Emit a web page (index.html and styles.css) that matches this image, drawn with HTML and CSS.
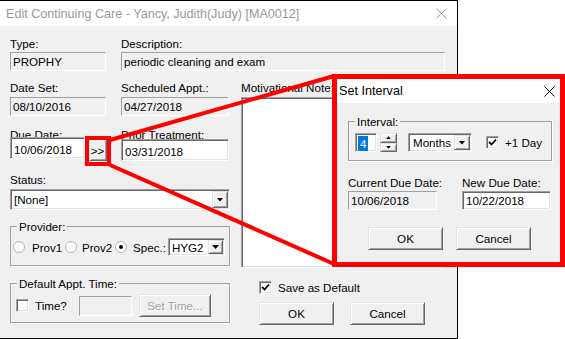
FILE: index.html
```html
<!DOCTYPE html>
<html lang="en">
<head>
    <meta charset="UTF-8">
    <meta name="viewport" content="width=device-width, initial-scale=1.0">
    <title>Edit Continuing Care</title>
    <link rel="stylesheet" href="styles.css">
</head>
<body>
<div class="screen">
    <div class="win">
        <div class="titlebar">
            <span class="title">Edit Continuing Care - Yancy, Judith(Judy) [MA0012]</span>
            <svg class="x" width="11" height="11" viewBox="0 0 11 11"><path d="M0.5 0.5L10.5 10.5M10.5 0.5L0.5 10.5" stroke="#999" stroke-width="1"/></svg>
        </div>
        <div class="body">
            <div class="row1">
                <div class="blk w-type">
                    <div class="lbl">Type:</div>
                    <div class="fld ro">PROPHY</div>
                </div>
                <div class="blk w-desc">
                    <div class="lbl">Description:</div>
                    <div class="fld ro">periodic cleaning and exam</div>
                </div>
            </div>
            <div class="main">
                <div class="left">
                    <div class="row2">
                        <div class="blk w-type">
                            <div class="lbl">Date Set:</div>
                            <div class="fld ro">08/10/2016</div>
                        </div>
                        <div class="blk w-sched">
                            <div class="lbl">Scheduled Appt.:</div>
                            <div class="fld ro">04/27/2018</div>
                        </div>
                    </div>
                    <div class="row3">
                        <div class="blk w-due">
                            <div class="lbl">Due Date:</div>
                            <div class="duebox">
                                <div class="fld ed tall w-duef">10/06/2018</div>
                                <div class="btn more">&gt;&gt;</div>
                            </div>
                        </div>
                        <div class="blk w-prior">
                            <div class="lbl">Prior Treatment:</div>
                            <div class="fld ed tall">03/31/2018</div>
                        </div>
                    </div>
                    <div class="lbl status-lbl">Status:</div>
                    <div class="combo ed status"><span>[None]</span><span class="drop"></span></div>
                    <fieldset class="grp provider">
                        <legend>Provider:</legend>
                        <div class="radios">
                            <div class="opt o1"><span class="radio"></span>Prov1</div>
                            <div class="opt o2"><span class="radio"></span>Prov2</div>
                            <div class="opt o3"><span class="radio on"></span>Spec.:</div>
                            <div class="combo ed hyg"><span>HYG2</span><span class="drop"></span></div>
                        </div>
                    </fieldset>
                    <fieldset class="grp deftime">
                        <legend>Default Appt. Time:</legend>
                        <div class="timerow">
                            <div class="opt tcheck"><span class="check"></span>Time?</div>
                            <div class="fld ro timefld"></div>
                            <div class="btn settime">Set Time...</div>
                        </div>
                    </fieldset>
                </div>
                <div class="right">
                    <div class="lbl">Motivational Note:</div>
                    <div class="memo ed"></div>
                    <div class="opt savedef">
                        <span class="check on"><svg width="9" height="9" viewBox="0 0 9 9"><path d="M1 4L3.5 6.5L8 1.5" fill="none" stroke="#000" stroke-width="1.8"/></svg></span>Save as Default
                    </div>
                    <div class="btnrow">
                        <div class="btn big">OK</div>
                        <div class="btn big">Cancel</div>
                    </div>
                </div>
            </div>
        </div>
    </div>

    <div class="dlg">
        <div class="dlg-title">
            <span class="dlg-name">Set Interval</span>
            <svg class="x" width="11" height="11" viewBox="0 0 11 11"><path d="M0.5 0.5L10.5 10.5M10.5 0.5L0.5 10.5" stroke="#000" stroke-width="1"/></svg>
        </div>
        <div class="dlg-body">
            <fieldset class="grp interval">
                <legend>Interval:</legend>
                <div class="introw">
                    <div class="fld ed spin"><span class="sel">4</span></div>
                    <div class="spinbtns">
                        <span class="btn sb"><span class="up"></span></span>
                        <span class="btn sb"><span class="dn"></span></span>
                    </div>
                    <div class="combo ed months"><span>Months</span><span class="drop"></span></div>
                    <div class="opt plusday">
                        <span class="check on"><svg width="9" height="9" viewBox="0 0 9 9"><path d="M1 4L3.5 6.5L8 1.5" fill="none" stroke="#000" stroke-width="1.8"/></svg></span>+1 Day
                    </div>
                </div>
            </fieldset>
            <div class="dates">
                <div class="blk w-date">
                    <div class="lbl">Current Due Date:</div>
                    <div class="fld ro">10/06/2018</div>
                </div>
                <div class="blk w-date">
                    <div class="lbl">New Due Date:</div>
                    <div class="fld ed">10/22/2018</div>
                </div>
            </div>
            <div class="dlg-btns">
                <div class="btn big">OK</div>
                <div class="btn big">Cancel</div>
            </div>
        </div>
    </div>

    <svg class="callout" width="565" height="339" viewBox="0 0 565 339">
        <rect x="87" y="138" width="22" height="26" fill="none" stroke="#f00" stroke-width="4"/>
        <line x1="110" y1="140" x2="334" y2="76" stroke="#f00" stroke-width="4"/>
        <line x1="110" y1="165" x2="334" y2="264" stroke="#f00" stroke-width="4"/>
    </svg>
</div>
</body>
</html>
```

FILE: styles.css
```css
*{
    margin: 0;
    padding: 0;
    box-sizing: border-box;
}
body{
    background: #fff;
    font-family: "Liberation Sans", Arial, sans-serif;
    font-size: 11.6px;
    color: #000;
}
.screen{
    position: relative;
    width: 565px;
    height: 339px;
    overflow: hidden;
}

/* main window */
.win{
    width: 458px;
    height: 339px;
    background: #f0f0f0;
    border: 1px solid #000;
    border-left: none;
}
.titlebar{
    height: 25px;
    background: #fff;
    display: flex;
    align-items: center;
    padding-left: 6px;
}
.title{
    flex: 1;
    font-size: 12.6px;
    color: #999;
}
.titlebar .x{
    margin-right: 10px;
}
.body{
    padding: 11px 0 0 10px;
}
.lbl{
    height: 13px;
    line-height: 13px;
    white-space: nowrap;
}
.blk .fld{
    margin-top: 2px;
}
.fld{
    height: 19px;
    line-height: 17px;
    padding-left: 2px;
    white-space: nowrap;
    overflow: hidden;
}
.ro{
    border: 1px solid;
    border-color: #a0a0a0 #fff #fff #a0a0a0;
}
.ed{
    background: #fff;
    border: 1px solid;
    border-color: #a0a0a0 #fff #fff #a0a0a0;
    box-shadow: inset 1px 1px #696969, inset -1px -1px #e3e3e3;
}
.btn{
    background: #f0f0f0;
    border: 1px solid;
    border-color: #e3e3e3 #696969 #696969 #e3e3e3;
    box-shadow: inset 1px 1px #fff, inset -1px -1px #a0a0a0;
    display: flex;
    align-items: center;
    justify-content: center;
}
.row1{
    display: flex;
    gap: 15px;
}
.w-type{ width: 96px; }
.w-desc{ width: 324px; }
.w-sched{ width: 108px; }
.w-due{ width: 97px; }
.w-prior{ width: 108px; }
.w-duef{ width: 75px; }

.main{
    display: flex;
    gap: 10px;
    margin-top: 10px;
}
.left{
    width: 221px;
}
.row2{
    display: flex;
    gap: 15px;
}
.row2 .fld{
    margin-top: 3px;
}
.row3{
    display: flex;
    gap: 14px;
    margin-top: 12px;
}
.row3 .blk .fld, .duebox{
    margin-top: -2px;
}
.duebox{
    display: flex;
    gap: 4px;
}
.duebox .fld{
    margin-top: 0;
}
.tall{
    height: 22px;
    line-height: 19px;
    padding-top: 2px;
    padding-left: 3px;
}
.more{
    width: 18px;
    height: 22px;
    padding-right: 1px;
}
.status-lbl{
    margin-top: 12px;
}
.combo{
    display: flex;
    align-items: center;
    justify-content: space-between;
    padding-left: 3px;
}
.status{
    width: 220px;
    height: 21px;
    margin-top: 3px;
}
.drop{
    width: 16px;
    height: calc(100% - 2px);
    margin-right: 1px;
    background: #f0f0f0;
    border: 1px solid;
    border-color: #e3e3e3 #696969 #696969 #e3e3e3;
    box-shadow: inset 1px 1px #fff, inset -1px -1px #a0a0a0;
    display: flex;
    align-items: center;
    justify-content: center;
}
.drop::after{
    content: "";
    width: 7px;
    height: 4px;
    background: #000;
    clip-path: polygon(0 0, 100% 0, 50% 100%);
}

/* group boxes */
.grp{
    border: 1px solid #a0a0a0;
    box-shadow: 1px 1px 0 #fff;
    padding: 0 0 0 2px;
    width: 220px;
}
.grp legend{
    margin-left: 4px;
    padding: 0 2px;
    line-height: 13px;
}
.provider{
    margin-top: 10px;
    padding-bottom: 9px;
}
.radios{
    display: flex;
    align-items: center;
    margin-top: 5px;
    height: 18px;
}
.opt{
    display: flex;
    align-items: center;
    gap: 7px;
    white-space: nowrap;
}
.o1{ width: 52px; }
.o2{ width: 50px; gap: 5px; }
.o3{ width: 53px; gap: 6px; }
.radio{
    width: 12px;
    height: 12px;
    border-radius: 50%;
    background: #fff;
    border: 1px solid #b4b4b4;
    display: flex;
    align-items: center;
    justify-content: center;
    flex: none;
}
.radio.on::after{
    content: "";
    width: 4px;
    height: 4px;
    border-radius: 50%;
    background: #000;
}
.hyg{
    width: 57px;
    height: 18px;
}
.hyg .drop{
    width: 15px;
}
.deftime{
    margin-top: 11px;
    padding-bottom: 5px;
}
.timerow{
    display: flex;
    align-items: center;
    margin-top: 4px;
    height: 23px;
}
.tcheck{
    width: 63px;
    margin-left: 3px;
    gap: 6px;
}
.check{
    width: 13px;
    height: 13px;
    background: #fff;
    border: 1px solid;
    border-color: #a0a0a0 #fff #fff #a0a0a0;
    box-shadow: inset 1px 1px #696969, inset -1px -1px #e3e3e3;
    display: flex;
    align-items: center;
    justify-content: center;
    flex: none;
}
.timefld{
    width: 53px;
    height: 20px;
}
.settime{
    width: 72px;
    height: 23px;
    margin-left: 7px;
    color: #a0a0a0;
    text-shadow: 1px 1px #fff;
}

.right{
    width: 204px;
}
.memo{
    height: 171px;
    margin-top: 3px;
}
.savedef{
    margin-top: 13px;
    padding-left: 18px;
    gap: 6px;
    height: 13px;
}
.btnrow{
    display: flex;
    gap: 16px;
    margin-top: 8px;
    padding-left: 18px;
}
.big{
    width: 75px;
    height: 23px;
}

/* set interval dialog */
.dlg{
    position: absolute;
    left: 332px;
    top: 74px;
    width: 233px;
    height: 193px;
    border: 5px solid #f00;
    background: #f0f0f0;
}
.dlg-title{
    height: 24px;
    background: #fff;
    display: flex;
    align-items: center;
    padding-left: 2px;
}
.dlg-name{
    flex: 1;
    font-size: 12.6px;
}
.dlg-title .x{
    margin-right: 5px;
}
.dlg-body{
    padding-left: 11px;
}
.interval{
    width: 204px;
    margin-top: 12px;
    padding-bottom: 8px;
}
.introw{
    display: flex;
    align-items: center;
    margin-top: 5px;
    height: 19px;
}
.spin{
    width: 22px;
    margin-left: 4px;
    padding: 2px 0 0 2px;
    line-height: 15px;
}
.sel{
    display: inline-block;
    background: #0078d7;
    color: #fff;
    padding: 0 2px;
    height: 15px;
}
.spinbtns{
    display: flex;
    flex-direction: column;
    margin-left: 3px;
    width: 17px;
    height: 19px;
}
.sb{
    height: 9.5px;
}
.up, .dn{
    width: 5px;
    height: 3px;
    background: #000;
}
.up{ clip-path: polygon(50% 0, 100% 100%, 0 100%); }
.dn{ clip-path: polygon(0 0, 100% 0, 50% 100%); }
.months{
    width: 64px;
    height: 19px;
    margin-left: 11px;
    padding-left: 4px;
}
.months .drop{
    width: 16px;
}
.plusday{
    margin-left: 14px;
    gap: 6px;
}
.dates{
    display: flex;
    gap: 25px;
    margin-top: 15px;
}
.w-date{
    width: 89px;
}
.dates .ed{
    padding-left: 3px;
}
.dlg-btns{
    display: flex;
    gap: 13px;
    margin-top: 17px;
    padding-left: 20px;
}

.callout{
    position: absolute;
    left: 0;
    top: 0;
    pointer-events: none;
}
```
